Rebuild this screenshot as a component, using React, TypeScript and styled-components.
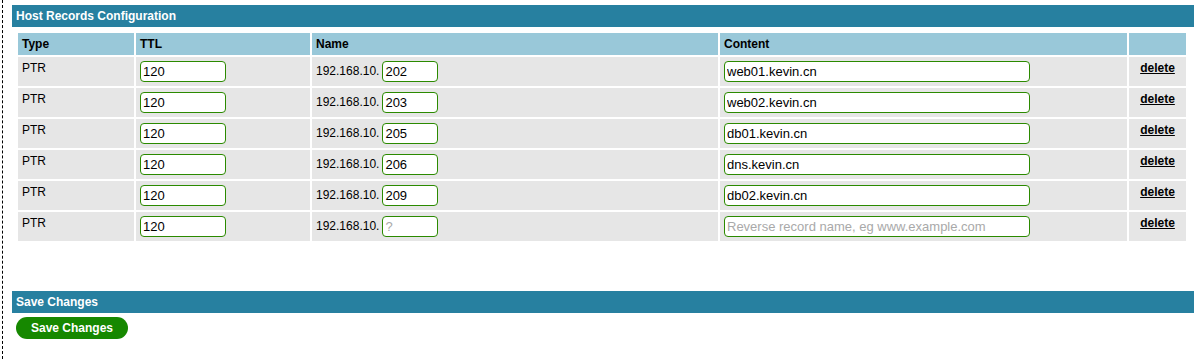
import styled, { createGlobalStyle } from "styled-components";

const GlobalStyle = createGlobalStyle`
  body {
    margin: 0;
    background: #ffffff;
    font-family: "Liberation Sans", Arial, sans-serif;
    font-size: 12px;
    color: #000000;
  }
`;

const Page = styled.div`
  margin-left: 2px;
  min-height: 359px;
  box-sizing: border-box;
  border-left: 1px dashed #000000;
  padding: 5px 10px 0 9px;
`;

const SectionBar = styled.div<{ $gap?: number }>`
  height: 22px;
  line-height: 22px;
  margin-top: ${({ $gap }) => $gap ?? 0}px;
  padding-left: 4px;
  background: #2780a0;
  color: #ffffff;
  font-weight: 700;
  font-size: 12px;
`;

const RecordsTable = styled.table`
  width: 1172px;
  margin: 4px 0 0 4px;
  border-collapse: separate;
  border-spacing: 2px;
`;

const HeadCell = styled.th<{ $w: number }>`
  width: ${({ $w }) => $w}px;
  height: 22px;
  box-sizing: border-box;
  padding: 0 4px;
  background: #99c8d9;
  text-align: left;
  font-weight: 700;
  font-size: 12px;
`;

const Cell = styled.td<{ $center?: boolean }>`
  height: 29px;
  box-sizing: border-box;
  padding: 4px;
  background: #e6e6e6;
  vertical-align: top;
  text-align: ${({ $center }) => ($center ? "center" : "left")};
  font-size: 12px;
  line-height: 15px;
`;

const NameWrap = styled.div`
  display: flex;
  align-items: center;
  gap: 3px;
`;

const Field = styled.input<{ $w: number }>`
  width: ${({ $w }) => $w}px;
  height: 21px;
  box-sizing: border-box;
  padding: 2px;
  border: 1px solid #2b8a00;
  border-radius: 4px;
  background: #ffffff;
  font-family: "Liberation Sans", Arial, sans-serif;
  font-size: 13px;
  color: #000000;
  outline: none;

  &::placeholder {
    color: #a9a9a9;
  }
`;

const DeleteLink = styled.a`
  font-weight: 700;
  color: #000000;
  text-decoration: underline;
  cursor: pointer;
`;

const SaveButton = styled.button`
  display: block;
  width: 112px;
  height: 22px;
  margin: 4px 0 0 4px;
  border: none;
  border-radius: 11px;
  background: #168800;
  color: #ffffff;
  font-family: "Liberation Sans", Arial, sans-serif;
  font-weight: 700;
  font-size: 12px;
  cursor: pointer;
`;

const records = [
  { host: "202", content: "web01.kevin.cn" },
  { host: "203", content: "web02.kevin.cn" },
  { host: "205", content: "db01.kevin.cn" },
  { host: "206", content: "dns.kevin.cn" },
  { host: "209", content: "db02.kevin.cn" },
  { host: "", content: "" },
];

export default function App() {
  return (
    <>
      <GlobalStyle />
      <Page>
        <SectionBar>Host Records Configuration</SectionBar>
        <RecordsTable>
          <thead>
            <tr>
              <HeadCell $w={116}>Type</HeadCell>
              <HeadCell $w={174}>TTL</HeadCell>
              <HeadCell $w={406}>Name</HeadCell>
              <HeadCell $w={407}>Content</HeadCell>
              <HeadCell $w={57}></HeadCell>
            </tr>
          </thead>
          <tbody>
            {records.map((r, i) => (
              <tr key={i}>
                <Cell>PTR</Cell>
                <Cell>
                  <Field $w={86} defaultValue="120" />
                </Cell>
                <Cell>
                  <NameWrap>
                    192.168.10.
                    <Field $w={56} defaultValue={r.host} placeholder="?" />
                  </NameWrap>
                </Cell>
                <Cell>
                  <Field
                    $w={306}
                    defaultValue={r.content}
                    placeholder="Reverse record name, eg www.example.com"
                  />
                </Cell>
                <Cell $center>
                  <DeleteLink>delete</DeleteLink>
                </Cell>
              </tr>
            ))}
          </tbody>
        </RecordsTable>
        <SectionBar $gap={48}>Save Changes</SectionBar>
        <SaveButton>Save Changes</SaveButton>
      </Page>
    </>
  );
}
